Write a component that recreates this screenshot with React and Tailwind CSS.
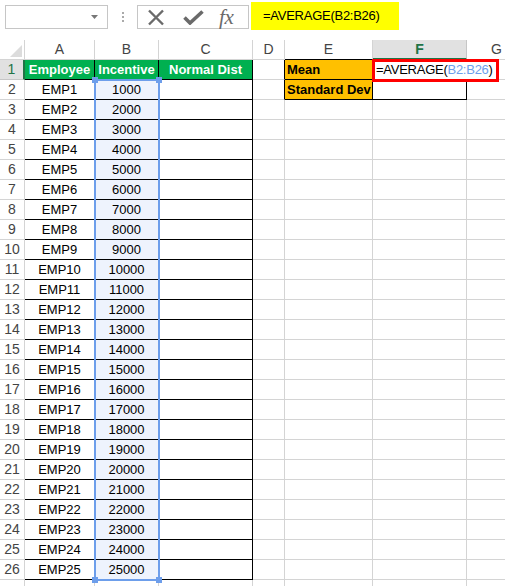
import React from 'react';

const COLS = [
  { id: 'A', w: 70 },
  { id: 'B', w: 64 },
  { id: 'C', w: 94 },
  { id: 'D', w: 32 },
  { id: 'E', w: 88 },
  { id: 'F', w: 94 },
  { id: 'G', w: 60 },
];

const ROWS = Array.from({ length: 25 }, (_, i) => ({
  n: i + 2,
  emp: `EMP${i + 1}`,
  inc: String((i + 1) * 1000),
}));

function Cell({ w, className = '', children }) {
  return (
    <div
      style={{ width: w }}
      className={`h-[20px] shrink-0 border-r border-b flex items-center whitespace-nowrap ${className}`}
    >
      {children}
    </div>
  );
}

function Toolbar() {
  return (
    <div className="h-[40px] flex items-start pl-[5px] pt-[5px]">
      {/* Name box */}
      <div className="w-[103px] h-[24px] border border-[#c6c6c6] flex items-center justify-end pr-[9px]">
        <svg width="7" height="4" viewBox="0 0 7 4">
          <path d="M0 0h7L3.5 4z" fill="#777" />
        </svg>
      </div>
      {/* grip dots */}
      <div className="w-[29px] h-[24px] flex flex-col items-center justify-center gap-[2px]">
        <span className="w-[2px] h-[2px] bg-[#aaa]" />
        <span className="w-[2px] h-[2px] bg-[#aaa]" />
        <span className="w-[2px] h-[2px] bg-[#aaa]" />
      </div>
      {/* cancel / enter / fx */}
      <div className="w-[112px] h-[24px] border border-[#c6c6c6] flex items-center">
        <svg width="18" height="17" viewBox="0 0 18 17" className="ml-[9px]">
          <path d="M2 1.5l14 14M16 1.5l-14 14" stroke="#6a6a6a" strokeWidth="2.4" />
        </svg>
        <svg width="21" height="15" viewBox="0 0 21 15" className="ml-[18px]">
          <path d="M1.5 7.5l5.5 5.5L19.5 1.5" stroke="#6a6a6a" strokeWidth="3.6" fill="none" />
        </svg>
        <span className="ml-[15px] text-[21px] leading-none italic text-[#6a6a6a] font-['Liberation_Serif',serif] tracking-[-0.02em]">
          fx
        </span>
      </div>
      {/* formula */}
      <div className="ml-[2px] -mt-[3px] w-[148px] h-[28px] bg-[#ffff00] flex items-center pl-[12px] text-[13px] text-black tracking-[-0.02em]">
        =AVERAGE(B2:B26)
      </div>
    </div>
  );
}

function HeaderRow() {
  return (
    <div className="flex">
      <div className="w-[25px] h-[20px] shrink-0 border-r border-b border-[#d4d4d4] relative">
        <svg width="12" height="12" viewBox="0 0 12 12" className="absolute right-[2px] bottom-[2px]">
          <path d="M12 0V12H0z" fill="#dcdcdc" />
        </svg>
      </div>
      {COLS.map((c) =>
        c.id === 'F' ? (
          <Cell
            key={c.id}
            w={c.w}
            className="justify-center bg-[#e1e1e1] border-[#c6c6c6] border-b-2 border-b-[#217346] text-[#217346] font-bold text-[14px]"
          >
            {c.id}
          </Cell>
        ) : (
          <Cell
            key={c.id}
            w={c.w}
            className={`justify-center text-[#444] text-[14px] border-[#d4d4d4] ${c.id === 'E' ? 'border-b-black' : ''}`}
          >
            {c.id}
          </Cell>
        )
      )}
    </div>
  );
}

export default function App() {
  return (
    <div className="w-[505px] h-[586px] overflow-hidden bg-white font-['Liberation_Sans',Arial,sans-serif] relative">
      <Toolbar />

      <div className="relative">
        <HeaderRow />

        {/* Row 1 */}
        <div className="flex">
          <div className="w-[25px] h-[20px] shrink-0 border-b border-r-2 border-[#c6c6c6] border-r-[#217346] bg-[#e1e1e1] flex items-center justify-center text-[14px] text-[#217346]">
            1
          </div>
          <Cell w={70} className="justify-center bg-[#00b050] border-black text-white font-bold text-[13px]">Employee</Cell>
          <Cell w={64} className="justify-center bg-[#00b050] border-black text-white font-bold text-[13px]">Incentive</Cell>
          <Cell w={94} className="justify-center bg-[#00b050] border-black text-white font-bold text-[13px]">Normal Dist</Cell>
          <Cell w={32} className="border-[#d4d4d4] border-r-black" />
          <Cell w={88} className="pl-[2px] bg-[#ffc000] border-black text-black font-bold text-[13px]">Mean</Cell>
          <Cell w={94} className="pl-[3px] border-b-black border-r-transparent text-[13px] text-black overflow-visible relative z-10 tracking-[-0.02em]">
            =AVERAGE(<span className="text-[#6d9eeb]">B2:B26</span>)
            <span className="inline-block w-[1px] h-[15px] bg-black ml-[1px]" />
          </Cell>
          <Cell w={60} className="border-[#d4d4d4]" />
        </div>

        {ROWS.map((r) => (
          <div key={r.n} className="flex">
            <div className="w-[25px] h-[20px] shrink-0 border-r border-b border-[#d4d4d4] flex items-center justify-center text-[14px] text-[#444]">
              {r.n}
            </div>
            <Cell w={70} className="justify-center border-black text-[13px] text-black">{r.emp}</Cell>
            <Cell w={64} className="justify-center bg-[#eef3fd] border-black text-[13px] text-black">{r.inc}</Cell>
            <Cell w={94} className="border-black" />
            <Cell w={32} className={`border-[#d4d4d4] ${r.n === 2 ? 'border-r-black' : ''}`} />
            {r.n === 2 ? (
              <>
                <Cell w={88} className="pl-[2px] bg-[#ffc000] border-black text-black font-bold text-[13px]">Standard Dev</Cell>
                <Cell w={94} className="border-black" />
              </>
            ) : (
              <>
                <Cell w={88} className="border-[#d4d4d4]" />
                <Cell w={94} className="border-[#d4d4d4]" />
              </>
            )}
            <Cell w={60} className="border-[#d4d4d4]" />
          </div>
        ))}

        {/* Row 27, partially visible */}
        <div className="flex">
          <div className="w-[25px] h-[20px] shrink-0 border-r border-[#d4d4d4]" />
          {COLS.map((c) => (
            <div key={c.id} style={{ width: c.w }} className="h-[20px] shrink-0 border-r border-[#d4d4d4]" />
          ))}
        </div>

        {/* Range highlight on B2:B26 */}
        <div className="absolute left-[94px] top-[39px] w-[66px] h-[502px] border-2 border-[#6d9eeb] pointer-events-none">
          <span className="absolute -left-[4px] -top-[4px] w-[6px] h-[6px] bg-[#6d9eeb]" />
          <span className="absolute -right-[4px] -top-[4px] w-[6px] h-[6px] bg-[#6d9eeb]" />
          <span className="absolute -left-[4px] -bottom-[4px] w-[6px] h-[6px] bg-[#6d9eeb]" />
          <span className="absolute -right-[4px] -bottom-[4px] w-[6px] h-[6px] bg-[#6d9eeb]" />
        </div>

        {/* Active cell outline */}
        <div className="absolute left-[372px] top-[19px] w-[127px] h-[23px] border-[3px] border-[#ff0000] pointer-events-none z-20" />
      </div>
    </div>
  );
}
